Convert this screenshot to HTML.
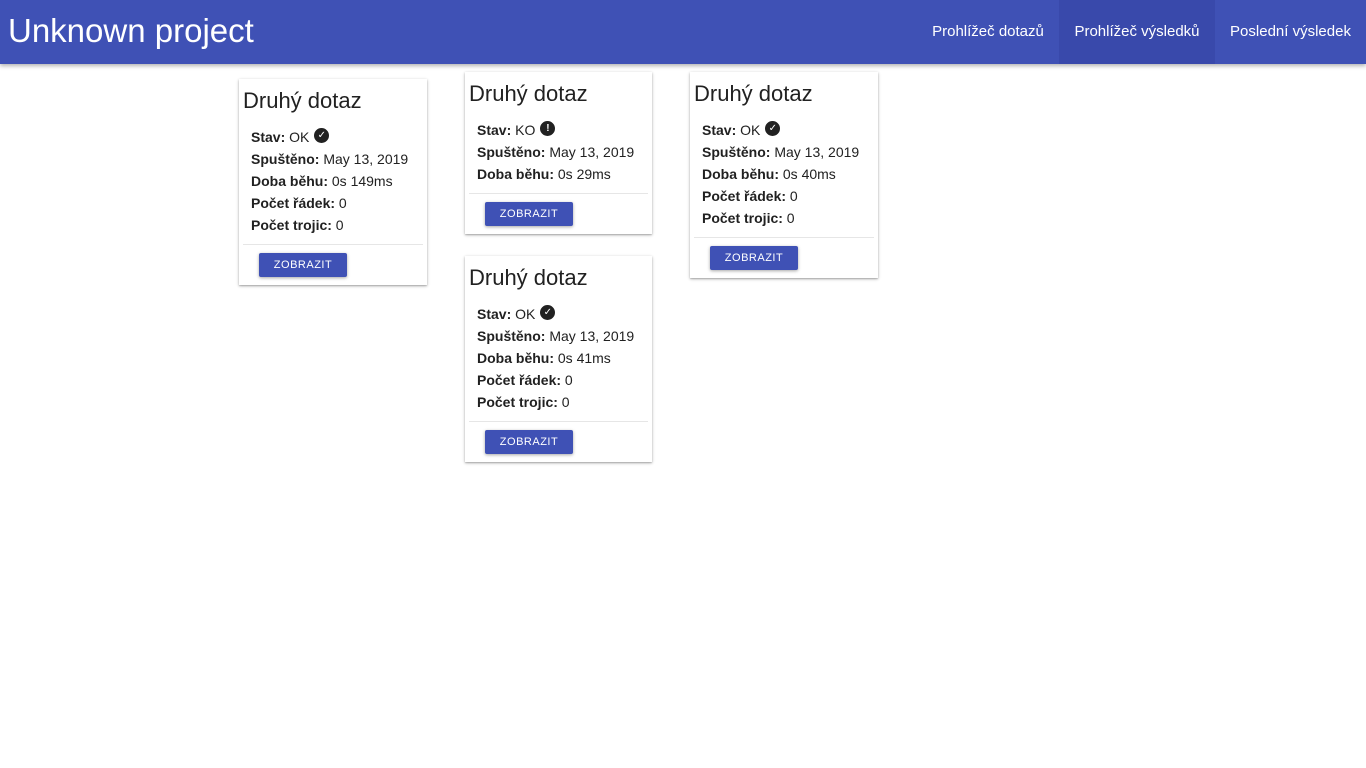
<!DOCTYPE html>
<html><head><meta charset="utf-8"><style>
body{margin:0;width:1366px;height:768px;background:#fff;font-family:"Liberation Sans","DejaVu Sans",sans-serif;color:#212121;position:relative;overflow:hidden}
.bar{position:absolute;left:0;top:0;width:1366px;height:64px;background:#3f51b5;box-shadow:0 2px 4px rgba(0,0,0,.3)}
.title{position:absolute;left:8px;top:12px;font-size:33px;color:#fff}
.nav{position:absolute;top:0;height:64px;line-height:64px;color:#fff;font-size:15px;text-align:center}
.card{position:absolute;width:188px;background:#fff;box-shadow:0 1px 3px rgba(0,0,0,.3),0 1px 1px rgba(0,0,0,.14)}
.card h2{margin:0;position:absolute;left:4px;top:9px;font-weight:300;font-size:22px;color:#212121;white-space:nowrap}
.rows{position:absolute;left:12px;top:47px;font-size:14px;line-height:22px;white-space:nowrap}
.rows b{font-weight:bold}
.div{position:absolute;left:4px;right:4px;height:1px;background:#e6e6e6}
.btn{position:absolute;left:20px;width:88px;height:24px;background:#3f51b5;color:#fff;font-size:11px;letter-spacing:.5px;line-height:24px;text-align:center;border-radius:2px;box-shadow:0 1px 3px rgba(0,0,0,.35)}
.ic{display:inline-block;width:15px;height:15px;border-radius:50%;background:#212121;color:#fff;font-size:10px;line-height:15px;text-align:center;vertical-align:4px;margin-left:5px;font-weight:bold}
</style></head><body>
<div class="bar">
<div class="title">Unknown project</div>
<div class="nav" style="left:917px;width:142px">Prohlížeč dotazů</div>
<div class="nav" style="left:1059px;width:156px;background:#3949ab">Prohlížeč výsledků</div>
<div class="nav" style="left:1215px;width:151px">Poslední výsledek</div>
</div>

<div class="card" style="left:239px;top:79px;height:206px">
<h2>Druhý dotaz</h2>
<div class="rows"><b>Stav:</b> OK<span class="ic">✓</span><br><b>Spuštěno:</b> May 13, 2019<br><b>Doba běhu:</b> 0s 149ms<br><b>Počet řádek:</b> 0<br><b>Počet trojic:</b> 0</div>
<div class="div" style="top:165px"></div>
<div class="btn" style="top:174px">ZOBRAZIT</div>
</div>

<div class="card" style="left:465px;top:72px;width:187px;height:162px">
<h2>Druhý dotaz</h2>
<div class="rows"><b>Stav:</b> KO<span class="ic">!</span><br><b>Spuštěno:</b> May 13, 2019<br><b>Doba běhu:</b> 0s 29ms</div>
<div class="div" style="top:121px"></div>
<div class="btn" style="top:130px">ZOBRAZIT</div>
</div>

<div class="card" style="left:465px;top:256px;width:187px;height:206px">
<h2>Druhý dotaz</h2>
<div class="rows"><b>Stav:</b> OK<span class="ic">✓</span><br><b>Spuštěno:</b> May 13, 2019<br><b>Doba běhu:</b> 0s 41ms<br><b>Počet řádek:</b> 0<br><b>Počet trojic:</b> 0</div>
<div class="div" style="top:165px"></div>
<div class="btn" style="top:174px">ZOBRAZIT</div>
</div>

<div class="card" style="left:690px;top:72px;height:206px">
<h2>Druhý dotaz</h2>
<div class="rows"><b>Stav:</b> OK<span class="ic">✓</span><br><b>Spuštěno:</b> May 13, 2019<br><b>Doba běhu:</b> 0s 40ms<br><b>Počet řádek:</b> 0<br><b>Počet trojic:</b> 0</div>
<div class="div" style="top:165px"></div>
<div class="btn" style="top:174px">ZOBRAZIT</div>
</div>
</body></html>
